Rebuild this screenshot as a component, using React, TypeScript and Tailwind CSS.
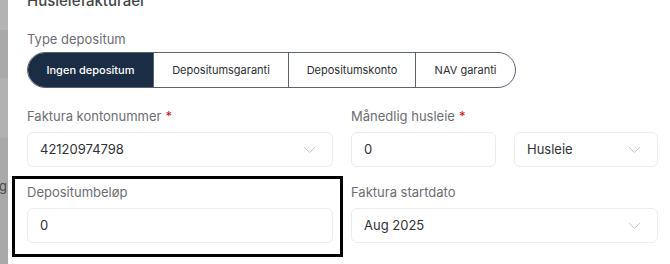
import { ReactNode } from "react";

const font = { fontFamily: "Inter, 'Noto Sans', sans-serif" };

function Chevron() {
  return (
    <svg width="13" height="8" viewBox="0 0 13 8" fill="none" aria-hidden>
      <polyline points="1,1 6.5,6.5 12,1" stroke="#c7c9cd" strokeWidth="1" />
    </svg>
  );
}

function Label({ children, required }: { children: ReactNode; required?: boolean }) {
  return (
    <div className="flex h-4 items-center text-[13px] leading-4 text-[#6b6e73]">
      {children}
      {required && <span className="ml-1 text-[#d0112b]">*</span>}
    </div>
  );
}

function Box({ value, select, className = "" }: { value: string; select?: boolean; className?: string }) {
  return (
    <div
      className={`flex h-[35px] items-center justify-between rounded-md border border-[#ececee] bg-white pr-[16px] pl-3 text-[13px] text-[#303236] ${className}`}
    >
      <span>{value}</span>
      {select && <Chevron />}
    </div>
  );
}

const tabs = ["Ingen depositum", "Depositumsgaranti", "Depositumskonto", "NAV garanti"];
const widths = ["w-[125px]", "w-[135px]", "w-[127px]", "w-[100px]"];

export default function App() {
  return (
    <div className="flex h-[264px] w-[670px] overflow-hidden bg-white" style={font}>
      <div className="relative w-2 shrink-0 bg-[#a9a9a9]">
        <div className="absolute top-0 h-[30px] w-full bg-[#b3b3b3]" />
        <div className="absolute top-[78px] h-[60px] w-full bg-[#b1b1b1]" />
        <span className="absolute top-[177px] right-[1px] text-[13px] text-[#4a4a4a]">g</span>
      </div>
      <div className="relative flex-1 pr-3 pl-[19px]">
        <div className="-mt-[9px] text-[15px] leading-5 font-medium text-[#44464a]">Husleiefakturaer</div>
        <div className="mt-5">
          <Label>Type depositum</Label>
          <div className="mt-[5px] flex h-[36px] w-fit overflow-hidden rounded-full border border-[#5b6270] text-[11px]">
            {tabs.map((t, i) => (
              <div
                key={t}
                className={`flex items-center justify-center ${widths[i]} ${
                  i === 0 ? "bg-[#1b2c45] font-medium text-white" : "border-l border-[#5b6270] text-[#2d2f33]"
                }`}
              >
                {t}
              </div>
            ))}
          </div>
        </div>

        <div className="mt-[20px] grid grid-cols-[306px_307px] gap-x-[18px] gap-y-[17px]">
          <div>
            <Label required>Faktura kontonummer</Label>
            <Box value="42120974798" select className="mt-2" />
          </div>
          <div>
            <Label required>Månedlig husleie</Label>
            <div className="mt-2 flex gap-[18px]">
              <Box value="0" className="w-[145px]" />
              <Box value="Husleie" select className="flex-1" />
            </div>
          </div>
          <div className="relative">
            <div className="pointer-events-none absolute -top-[8px] -right-[10px] -bottom-[14px] -left-[15px] border-[3px] border-black" />
            <Label>Depositumbeløp</Label>
            <Box value="0" className="mt-2" />
          </div>
          <div>
            <Label>Faktura startdato</Label>
            <Box value="Aug 2025" select className="mt-2" />
          </div>
        </div>
      </div>
    </div>
  );
}
